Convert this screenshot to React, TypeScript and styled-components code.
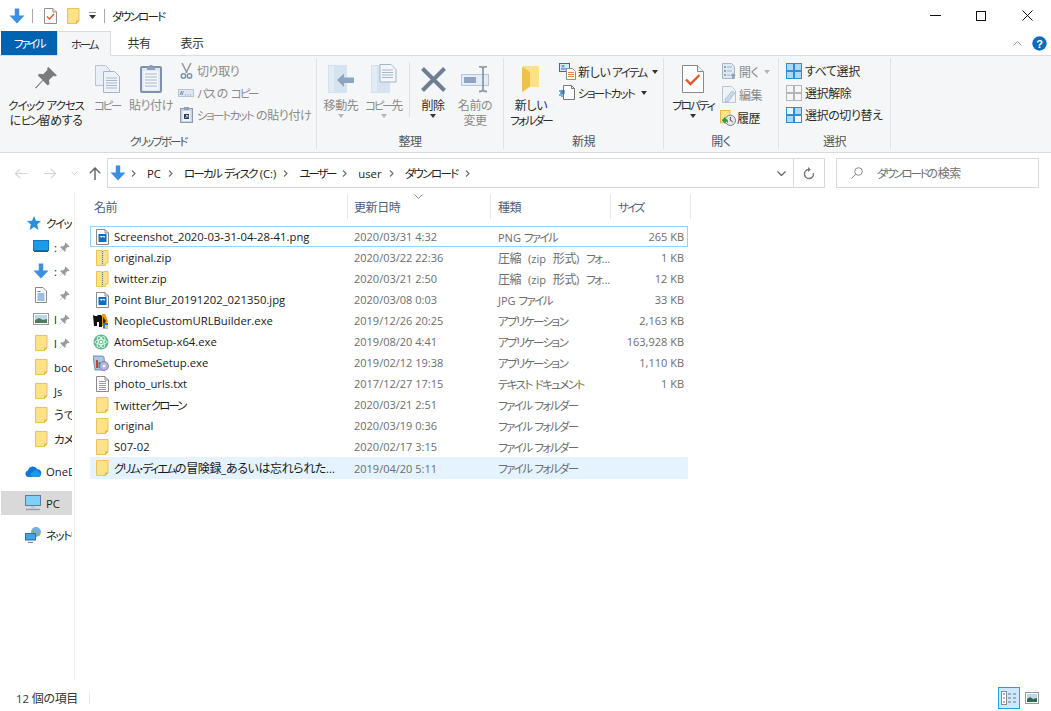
import React from "react";
import styled, { createGlobalStyle } from "styled-components";

const Global = createGlobalStyle`
  html, body { margin: 0; padding: 0; background: #fff; overflow: hidden; }
  body { font-family: "Open Sans", "Noto Sans CJK JP", sans-serif; font-size: 11.3px; color: #1a1a1a; font-feature-settings: "palt"; }
  svg { display: block; flex: none; }
`;

const KanaRun = styled.span<{ $ls: number }>`letter-spacing: ${p => p.$ls}px; font-size: 11.5px;`;
const KanjiRun = styled.span`font-size: 12px; letter-spacing: -0.4px;`;

/* Splits a label into katakana and kanji/hiragana runs: the reference's UI font sets katakana narrow and kanji full-width. */
const T = ({ s, ls = -1.6 }: { s: string; ls?: number }) => (
  <>
    {s.split(/([ァ-ヶー・･]+|[一-龯ぁ-ん]+)/).filter(Boolean).map((run, i) =>
      /^[ァ-ヶー・･]/.test(run) ? <KanaRun key={i} $ls={ls}>{run}</KanaRun>
        : /^[一-龯ぁ-ん]/.test(run) ? <KanjiRun key={i}>{run}</KanjiRun>
        : <span key={i}>{run}</span>
    )}
  </>
);

const Win = styled.div`width: 1051px; height: 711px; display: flex; flex-direction: column; overflow: hidden;`;

const TitleBar = styled.div`height: 31px; display: flex; align-items: center; padding: 0 1px 0 9px;`;
const QatSep = styled.div<{ $ml: number; $mr: number }>`width: 1px; height: 14px; background: #a8a8a8; margin: 0 ${p => p.$mr}px 0 ${p => p.$ml}px;`;
const QatGap = styled.div<{ $w: number }>`width: ${p => p.$w}px;`;
const TitleText = styled.div`color: #222; flex: 1;`;
const WinBtn = styled.div`width: 46px; height: 31px; display: flex; align-items: center; justify-content: center;`;

const TabRow = styled.div`height: 25px; box-sizing: border-box; display: flex; align-items: stretch; padding: 0 4px 0 1px; border-bottom: 1px solid #dadbdc;`;
const FileTab = styled.div`width: 56px; background: #0063b1; color: #fff; display: flex; align-items: center; justify-content: center;`;
const Tab = styled.div<{ $active?: boolean; $w: number }>`
  width: ${p => p.$w}px; display: flex; align-items: center; justify-content: center; color: #333; box-sizing: border-box;
  ${p => p.$active ? `background:#f5f6f7; border:1px solid #dadbdc; border-bottom:1px solid #f5f6f7; margin-bottom:-1px;` : ""}
`;
const TabSpacer = styled.div`flex: 1;`;
const TabRight = styled.div`display: flex; align-items: center; gap: 10px;`;

const Ribbon = styled.div`height: 97px; background: #f5f6f7; border-bottom: 1px solid #dadbdc; display: flex; box-sizing: border-box;`;
const Group = styled.div<{ $w: number }>`width: ${p => p.$w}px; box-sizing: border-box; display: flex; flex-direction: column; padding: 3px 0 1px;`;
const GroupRule = styled.div`width: 1px; margin: 2px 0 3px; background: #e1e2e3;`;
const GroupBody = styled.div`flex: 1; display: flex; align-items: flex-start; min-height: 0;`;
const GroupLabel = styled.div`height: 18px; line-height: 18px; text-align: center; color: #555; white-space: nowrap;`;

const BigBtn = styled.div<{ $w: number; $dim?: boolean; $ml?: number }>`
  width: ${p => p.$w}px; margin-left: ${p => p.$ml ?? 0}px; display: flex; flex-direction: column; align-items: center; flex: none;
  color: ${p => p.$dim ? "#8a8a8a" : "#2b2b2b"}; line-height: 14.5px; text-align: center; white-space: nowrap;
`;
const BigIcon = styled.div`height: 32px; display: flex; align-items: flex-end; justify-content: center; margin: 2px 0 6px;`;
const Caret = styled.div<{ $dim?: boolean }>`width: 0; height: 0; border-left: 3.5px solid transparent; border-right: 3.5px solid transparent; border-top: 4px solid ${p => p.$dim ? "#b5b5b5" : "#333"}; margin-top: 0;`;
const InlineCaret = styled(Caret)`display: inline-block; margin: 0 0 0 4px; vertical-align: middle;`;

const SmallCol = styled.div<{ $ml: number; $gap: number; $pt: number }>`
  margin-left: ${p => p.$ml}px; padding-top: ${p => p.$pt}px; display: flex; flex-direction: column; gap: ${p => p.$gap}px; flex: none;
`;
const SmallBtn = styled.div<{ $dim?: boolean; $gap?: number; $ml?: number }>`
  display: flex; align-items: center; height: 17px; gap: ${p => p.$gap ?? 3}px; white-space: nowrap; margin-left: ${p => p.$ml ?? 0}px;
  color: ${p => p.$dim ? "#8a8a8a" : "#2b2b2b"};
`;
const SmallSlot = styled.div`width: 16px; display: flex; justify-content: center; flex: none;`;
const GroupRuleInner = styled.div`width: 1px; height: 55px; background: #dfe0e1; margin: 3px 0 0 4px; flex: none;`;

const AddressRow = styled.div`height: 39px; display: flex; align-items: center; padding-top: 1px; box-sizing: border-box;`;
const NavZone = styled.div`width: 107px; display: flex; align-items: center; padding-left: 14px; box-sizing: border-box;`;
const NavBtn = styled.div<{ $ml: number }>`margin-left: ${p => p.$ml}px; flex: none;`;
const AddrBox = styled.div`width: 718px; height: 30px; box-sizing: border-box; border: 1px solid #d9d9d9; display: flex; align-items: center; padding-left: 2px;`;
const Crumbs = styled.div`flex: 1; display: flex; align-items: center; color: #222; white-space: nowrap;`;
const CrumbChev = styled.div`margin: 0 11px 0 7px; flex: none;`;
const CrumbFirstChev = styled(CrumbChev)`margin-left: 5px;`;
const AddrEnd = styled.div`width: 30px; height: 28px; display: flex; align-items: center; justify-content: center; border-left: 1px solid #d9d9d9;`;
const AddrDrop = styled.div`width: 24px; display: flex; justify-content: center;`;
const SearchBox = styled.div`margin-left: 11px; width: 203px; height: 30px; box-sizing: border-box; border: 1px solid #d9d9d9; display: flex; align-items: center; padding-left: 14px; gap: 14px; color: #707070;`;

const Main = styled.div`flex: 1; display: flex; min-height: 0;`;
const Sidebar = styled.div`width: 75px; box-sizing: border-box; border-right: 1px solid #f0f0f0; padding: 19px 0 0 1px; display: flex; flex-direction: column; margin-bottom: 5px;`;
const SideItem = styled.div<{ $sel?: boolean; $indent: number; $gapTop?: number }>`
  width: 71px; height: 24px; flex: none; display: flex; align-items: center; overflow: hidden; white-space: nowrap; box-sizing: border-box;
  padding-left: ${p => p.$indent}px; margin-top: ${p => p.$gapTop ?? 0}px; background: ${p => p.$sel ? "#d9d9d9" : "transparent"};
  color: #222;
`;
const SideIcon = styled.div`width: 16px; margin-right: 5px; flex: none; display: flex; justify-content: center;`;
const SideMark = styled.div`width: 5px; overflow: hidden; flex: none;`;
const StarSlot = styled.div`margin-right: 5px; flex: none;`;

const Content = styled.div`flex: 1; padding: 2px 0 0 15px; box-sizing: border-box; min-width: 0;`;
const Head = styled.div`display: flex; height: 25px; margin-bottom: 7px;`;
const HeadCell = styled.div<{ $w: number; $pl: number }>`
  width: ${p => p.$w}px; box-sizing: border-box; border-right: 1px solid #e5e5e5; padding-left: ${p => p.$pl}px; display: flex; align-items: center; position: relative;
  color: #4c607a;
`;
const SortMark = styled.div`position: absolute; top: 0; left: 66px;`;
const Row = styled.div<{ $focus?: boolean; $sel?: boolean }>`
  width: 598px; height: ${p => p.$sel ? 22 : 21}px; box-sizing: border-box; display: grid; grid-template-columns: 258px 144px 118px 78px; align-items: center;
  ${p => p.$focus ? "box-shadow: inset 0 0 0 1px #99d1ff;" : ""}
  ${p => p.$sel ? "background: #e5f3ff;" : ""}
`;
const NameCell = styled.div`display: flex; align-items: center; padding-left: 3px; gap: 5px; white-space: nowrap; overflow: hidden; color: #1a1a1a;`;
const FileIcon = styled.div`width: 16px; flex: none; display: flex; justify-content: flex-end;`;
const MetaCell = styled.div<{ $right?: boolean; $wide?: boolean }>`
  color: #6d6d6d; font-size: 11px; white-space: nowrap; padding-left: ${p => p.$right ? 0 : 6}px; ${p => p.$right ? "text-align:right; padding-right:4px;" : ""}
  ${p => p.$wide ? "word-spacing: 4px;" : ""}
`;

const Status = styled.div`height: 26px; display: flex; align-items: center; padding-left: 16px; color: #333; flex: none;`;
const StatusRule = styled.div`width: 1px; height: 12px; background: #eaeaea; margin-left: 11px;`;
const StatusSpacer = styled.div`flex: 1;`;
const ViewBtn = styled.div<{ $on?: boolean }>`
  width: 22px; height: 22px; box-sizing: border-box; display: flex; align-items: center; justify-content: center; margin-right: ${p => p.$on ? 1 : 8}px;
  ${p => p.$on ? "background:#cce8ff; border:1px solid #26a0da;" : ""}
`;

/* ---- icons ---- */
const DownArrow = ({ s = 16 }: { s?: number }) => (
  <svg width={s} height={s} viewBox="0 0 16 16"><path d="M5.800 0.500h4.400v7h5.300L8 15.500 .5 7.500h5.300z" fill="#3a8fe0" /></svg>
);
const CheckDoc = ({ w = 13, h = 16 }: { w?: number; h?: number }) => (
  <svg width={w} height={h} viewBox="0 0 13 16"><path d="M.5.500h8.500l3.500 3.500v11.500H.5z" fill="#fff" stroke="#8f8f8f" /><path d="M9 .5V4h3.500" fill="#eee" stroke="#8f8f8f" /><path d="M3 8.500l2.500 2.500 4.500-5" fill="none" stroke="#e8561f" strokeWidth="1.400" /></svg>
);
const Folder = () => (
  <svg width="13" height="16" viewBox="0 0 13 16"><path d="M.5 .5h11.500v12.500h-2.500v2.500H.5z" fill="#fde28a" stroke="#e9c452" /><path d="M9.500 13v2.500l2.500-2.500z" fill="#f1ca5f" stroke="#e0b540" strokeWidth=".7" /></svg>
);
const ZipIcon = () => (
  <svg width="13" height="16" viewBox="0 0 13 16"><path d="M.5 .5h11.500v12.500h-2.500v2.500H.5z" fill="#fde28a" stroke="#e9c452" /><rect x="5" y="0" width="3" height="15" fill="#d8d8d0" /><path d="M6.500 1v13" stroke="#7a7a70" strokeDasharray="1 1" /></svg>
);
const ImgFile = () => (
  <svg width="13" height="16" viewBox="0 0 13 16"><path d="M.5.500h8.500l3.500 3.500v11.500H.5z" fill="#fff" stroke="#8a8a8a" /><path d="M9 .5V4h3.500" fill="none" stroke="#8a8a8a" /><rect x="2.500" y="5" width="8" height="8" fill="#0d6fc4" /><path d="M3.500 7l2 2 1-1.500 2 1.500.5-2z" fill="#dff0ff" /></svg>
);
const TxtFile = () => (
  <svg width="13" height="16" viewBox="0 0 13 16"><path d="M.5.500h8.500l3.500 3.500v11.500H.5z" fill="#fff" stroke="#8a8a8a" /><path d="M9 .5V4h3.500" fill="none" stroke="#8a8a8a" /><path d="M3 5.500h7M3 7.500h7M3 9.500h7M3 11.500h7M3 13.500h7" stroke="#9a9a9a" /></svg>
);
const NeopleIcon = () => (
  <svg width="16" height="16" viewBox="0 0 16 16"><path d="M0 2l2 1h2l1-1h3l1 1v11H6V9H4v4H1z" fill="#111" /><path d="M9 1h3l3 7-2 5H9z" fill="#e89a1c" /><path d="M10 4l3 4-2 3-1-1z" fill="#3a2207" /><rect x="10" y="10" width="5" height="5.500" fill="#2f77c9" /><rect x="12" y="12" width="3" height="3.500" fill="#f6c934" /></svg>
);
const AtomIcon = () => (
  <svg width="16" height="16" viewBox="0 0 16 16"><circle cx="8" cy="8" r="7.500" fill="#5cb98a" /><g fill="none" stroke="#e8fbf1" strokeWidth=".9"><ellipse cx="8" cy="8" rx="6" ry="2.500" /><ellipse cx="8" cy="8" rx="6" ry="2.500" transform="rotate(60 8 8)" /><ellipse cx="8" cy="8" rx="6" ry="2.500" transform="rotate(120 8 8)" /></g><circle cx="8" cy="8" r="1.300" fill="#fff" /></svg>
);
const SetupIcon = () => (
  <svg width="16" height="16" viewBox="0 0 16 16"><path d="M0 1h9l2 1 1 13H2z" fill="#a7c8e8" stroke="#60798f" strokeWidth=".8" /><rect x="3" y="5" width="2" height="8" fill="#d23b32" /><rect x="5.500" y="7" width="2" height="6" fill="#3a9b4a" /><circle cx="11" cy="11" r="4.500" fill="#b8b2e0" stroke="#6b67a8" strokeWidth=".7" /><circle cx="11" cy="11" r="1.300" fill="#fff" /></svg>
);
const Pin = ({ c = "#9a9a9a" }: { c?: string }) => (
  <svg width="11" height="11" viewBox="0 0 11 11"><path d="M6.500 .5l4 4-1 .7-1-.3-2 2 .2 2-1 .8-2-2.200L.7 10.500l-.2-.2 2.900-3-2.200-2 .8-1 2 .2 2-2-.3-1z" fill={c} /></svg>
);
const Monitor = () => (
  <svg width="16" height="14" viewBox="0 0 16 14"><rect x=".5" y=".5" width="15" height="10" fill="#1c9be6" stroke="#1278bd" /><rect x="1" y="10.500" width="14" height="1.500" fill="#0d5f9c" /></svg>
);
const DocThumb = () => (
  <svg width="12" height="16" viewBox="0 0 12 16"><path d="M.5.500h7.500l3.500 3.500v11.500H.5z" fill="#fff" stroke="#8a8a8a" /><path d="M2.500 4.500h3M2.500 7h7M2.500 9h7M2.500 11h7M2.500 13h7" stroke="#3f7ec2" /></svg>
);
const PicThumb = () => (
  <svg width="16" height="12" viewBox="0 0 16 12"><rect x=".5" y=".5" width="15" height="11" fill="#fff" stroke="#9a9a9a" /><rect x="2" y="2" width="12" height="8" fill="#bcd9e8" /><path d="M2 7l4-2 4 2 4-1v4H2z" fill="#4f7a5e" /></svg>
);
const Cloud = () => (
  <svg width="17" height="11" viewBox="0 0 17 11"><path d="M3.500 11A3.300 3.300 0 0 1 3 4.500 5 5 0 0 1 12.300 3.200 4 4 0 0 1 13.500 11z" fill="#0f78d4" /><path d="M7 11a2.500 2.500 0 0 1 .5-4.800 3.600 3.600 0 0 1 6.500.2A2.400 2.400 0 0 1 14 11z" fill="#1c9be6" /></svg>
);
const PcIcon = () => (
  <svg width="16" height="16" viewBox="0 0 16 16"><rect x=".5" y=".5" width="15" height="10" fill="#7fd0f7" stroke="#5b7f99" /><path d="M6 11h4v2H6z" fill="#bcc7d0" /><path d="M1 14.500h14" stroke="#8ea2b3" strokeWidth="1.500" /></svg>
);
const NetIcon = () => (
  <svg width="17" height="16" viewBox="0 0 17 16"><circle cx="11" cy="5" r="5" fill="#6fb2ea" /><path d="M8 2c2 1 2 3 1 4s-2 1-2-1zM12 5c2-1 3 0 3 2s-3 3-3 1z" fill="#8fb65e" /><rect x=".5" y="6.500" width="10" height="6.500" fill="#3ea5ea" stroke="#2a6fa8" /><path d="M3 15.500h5" stroke="#6b8aa3" strokeWidth="1.200" /></svg>
);
const Chev = () => (
  <svg width="5" height="7" viewBox="0 0 5 7"><path d="M1 .5l3 3-3 3" fill="none" stroke="#707070" strokeWidth="1.200" /></svg>
);

const PinBig = () => (
  <svg width="22" height="26" viewBox="0 0 22 26"><path d="M13.500 0l8.500 8.500-2 1-1.500-.7-4.500 4.300.5 3.900-1.800 1.500-4.700-4.700L1 21.500l-1-.7 7.500-7.700-4.700-4.500L4.300 6.800l3.900.4 4.300-4.500-.5-1.400z" fill="#7b7b7b" /></svg>
);
const CopyBig = () => (
  <svg width="25" height="28" viewBox="0 0 25 28"><path d="M.5.500h10l4 4v16H.5z" fill="#eaf0f7" stroke="#b7c4d3" /><path d="M8.500 6.500h11l5 5v16h-16z" fill="#eef3f9" stroke="#a5b4c6" /><path d="M11 13h11M11 15.500h11M11 18h11M11 20.500h11M11 23h11" stroke="#a9b8ca" /></svg>
);
const PasteBig = () => (
  <svg width="22" height="29" viewBox="0 0 22 29"><rect x="1" y="3" width="20" height="25" rx="1" fill="#dfe7f2" stroke="#7f92ad" strokeWidth="2" /><rect x="3.500" y="7" width="15" height="19" fill="#f2f5fa" /><path d="M5 10h12M5 13h12M5 16h12M5 19h12M5 22h12" stroke="#aab8cb" /><path d="M7 6V3h2.500V1h3v2H15v3z" fill="#8fa0b8" /></svg>
);
const Scissors = () => (
  <svg width="13" height="16" viewBox="0 0 13 16"><path d="M2 0l5 10M11 0L6 10" stroke="#9a9a9a" strokeWidth="1.600" fill="none" /><circle cx="3.500" cy="13" r="2.200" fill="none" stroke="#7d93ad" strokeWidth="1.500" /><circle cx="9.500" cy="13" r="2.200" fill="none" stroke="#7d93ad" strokeWidth="1.500" /></svg>
);
const PathIcon = () => (
  <svg width="16" height="8" viewBox="0 0 16 8"><rect x=".5" y=".5" width="15" height="7" fill="#dde6f2" stroke="#b7c4d6" /><path d="M2 6l1.500-4L4 6l1.500-4M7 6h1M9.500 6h1M12 6h1" stroke="#7a8aa0" strokeWidth=".8" fill="none" /></svg>
);
const PasteShortcut = () => (
  <svg width="13" height="16" viewBox="0 0 13 16"><rect x=".5" y="1.500" width="12" height="14" fill="#c9d3e0" stroke="#8b9ab0" /><rect x="2.500" y="4" width="8" height="10" fill="#f2f5fa" /><rect x="4" y="0" width="5" height="3" fill="#8fa0b8" /><path d="M4 7h5v5H4z" fill="#26415f" /><path d="M5.300 11l2-2M6 8.500h1.800V10.300" stroke="#fff" strokeWidth=".8" fill="none" /></svg>
);
const MoveBig = () => (
  <svg width="26" height="28" viewBox="0 0 26 28"><path d="M0 0h19v28H0z" fill="#d5e2f0" /><path d="M1 1h5v26H1z" fill="#e3ecf5" /><path d="M9 15l7-6.500v4h10v5.500H16v4z" fill="#8ea5c0" /></svg>
);
const CopyToBig = () => (
  <svg width="26" height="29" viewBox="0 0 26 29"><path d="M0 1h19v28H0z" fill="#d5e2f0" /><path d="M1 2h5v26H1z" fill="#e3ecf5" /><path d="M9 .5h11l5 5V18H9z" fill="#f3f6fa" stroke="#a5b4c6" /><path d="M11 6h11M11 8.500h11M11 11h11M11 13.500h11" stroke="#a5b4c6" /></svg>
);
const XBig = () => (
  <svg width="25" height="26" viewBox="0 0 25 26"><path d="M1.500 1.500l22 22M23.500 1.500l-22 22" stroke="#6f7f93" strokeWidth="4" /></svg>
);
const RenameBig = () => (
  <svg width="29" height="27" viewBox="0 0 29 27"><rect x=".5" y="8.500" width="27" height="11" fill="#e4ecf5" stroke="#b5c4d6" /><rect x="3" y="11" width="12" height="6" fill="#8ea5c0" /><path d="M18 .5c3 0 4 1 4 2v21c0 1-1 2-4 2M26 .5c-3 0-4 1-4 2v21c0 1 1 2 4 2" fill="none" stroke="#8c9bad" strokeWidth="1.800" /></svg>
);
const FolderBig = () => (
  <svg width="21" height="28" viewBox="0 0 21 28"><path d="M2 1h16v21H9L2 27z" fill="#fbd973" /><path d="M1 2v25l8-6V7z" fill="#f0bf4e" /><path d="M3 1h15v21H9V7z" fill="#fde08a" /></svg>
);
const NewItem = () => (
  <svg width="17" height="17" viewBox="0 0 17 17"><rect x=".5" y=".5" width="10" height="8" fill="#dbeafb" stroke="#2c6fb3" /><path d="M2 6h7" stroke="#2c6fb3" /><rect x="2.500" y="2" width="3" height="2.500" fill="#6aa5dd" /><path d="M7.500 5.500h6l3 3v8h-9z" fill="#fff" stroke="#8f8f8f" /><path d="M9 9.500h6M9 11.500h6M9 13.500h6" stroke="#e28a3a" /></svg>
);
const ShortcutIc = () => (
  <svg width="16" height="15" viewBox="0 0 16 15"><path d="M4.500.5h8l3 3v11h-11z" fill="#fff" stroke="#777" /><path d="M12.500.5v3h3" fill="none" stroke="#777" /><path d="M0 6h6M1 8h5M0 10h2M3 5v7" stroke="#1268b3" fill="none" /></svg>
);
const PropBig = () => (
  <svg width="22" height="28" viewBox="0 0 22 28"><path d="M.5.500h15l6 6v21H.5z" fill="#fff" stroke="#8a8a8a" /><path d="M15.500.5v6h6" fill="#eee" stroke="#8a8a8a" /><path d="M4 14.500l4.500 4.500 9-9" fill="none" stroke="#e8561f" strokeWidth="2.400" /></svg>
);
const OpenIc = () => (
  <svg width="15" height="17" viewBox="0 0 15 17"><path d="M.5.500h9l3 3v12H.5z" fill="#e0e8f2" stroke="#a5b4c6" /><path d="M2 3h2v2H2zM2 7h2v2H2zM2 11h2v2H2z" fill="#8ea5c0" /><path d="M5 4h5M5 8h5M5 12h3" stroke="#a5b4c6" /><path d="M11 10l3 3h-2v3h-2v-3H8z" fill="#8ea5c0" /></svg>
);
const EditIc = () => (
  <svg width="15" height="17" viewBox="0 0 15 17"><path d="M.5.500h9l4 4v12H.5z" fill="#f0f4f9" stroke="#b5c4d6" /><path d="M10 5l3 2-7 9-3 0 0-3z" fill="#c8d7e8" stroke="#a5b9d0" strokeWidth=".7" /></svg>
);
const HistIc = () => (
  <svg width="16" height="16" viewBox="0 0 17 17"><rect x=".5" y=".5" width="10" height="13" fill="#fde28a" stroke="#e2b93f" /><circle cx="11" cy="11" r="5.500" fill="#e6e6e6" stroke="#777" /><path d="M11 7.500V11l2.500 1.500" fill="none" stroke="#444" /><path d="M2 11l3.500-4v2.300c2 0 3 1 3 3v2c-.5-1.500-1.500-2-3-2V15z" fill="#2f9e3f" /></svg>
);
const SelGrid = ({ mode }: { mode: "all" | "none" | "inv" }) => {
  const cells = [[0, 0], [8, 0], [0, 8], [8, 8]];
  const on = mode === "all" ? [1, 1, 1, 1] : mode === "none" ? [0, 0, 0, 0] : [0, 1, 1, 0];
  return (
    <svg width="16" height="16" viewBox="0 0 16 16">
      {cells.map(([x, y], i) => (
        <rect key={i} x={x + .5} y={y + .5} width="7" height="7" fill={on[i] ? "#aed6f6" : "#f5f6f7"} stroke={on[i] ? "#2c8fd9" : mode === "none" ? "#b5b5b5" : "#2c8fd9"} />
      ))}
    </svg>
  );
};

const files: { name: string; date: string; type: string; size: string; icon: React.ReactNode }[] = [
  { name: "Screenshot_2020-03-31-04-28-41.png", date: "2020/03/31 4:32", type: "PNG ファイル", size: "265 KB", icon: <ImgFile /> },
  { name: "original.zip", date: "2020/03/22 22:36", type: "圧縮 (zip 形式) フォ...", size: "1 KB", icon: <ZipIcon /> },
  { name: "twitter.zip", date: "2020/03/21 2:50", type: "圧縮 (zip 形式) フォ...", size: "12 KB", icon: <ZipIcon /> },
  { name: "Point Blur_20191202_021350.jpg", date: "2020/03/08 0:03", type: "JPG ファイル", size: "33 KB", icon: <ImgFile /> },
  { name: "NeopleCustomURLBuilder.exe", date: "2019/12/26 20:25", type: "アプリケーション", size: "2,163 KB", icon: <NeopleIcon /> },
  { name: "AtomSetup-x64.exe", date: "2019/08/20 4:41", type: "アプリケーション", size: "163,928 KB", icon: <AtomIcon /> },
  { name: "ChromeSetup.exe", date: "2019/02/12 19:38", type: "アプリケーション", size: "1,110 KB", icon: <SetupIcon /> },
  { name: "photo_urls.txt", date: "2017/12/27 17:15", type: "テキスト ドキュメント", size: "1 KB", icon: <TxtFile /> },
  { name: "Twitterクローン", date: "2020/03/21 2:51", type: "ファイル フォルダー", size: "", icon: <Folder /> },
  { name: "original", date: "2020/03/19 0:36", type: "ファイル フォルダー", size: "", icon: <Folder /> },
  { name: "S07-02", date: "2020/02/17 3:15", type: "ファイル フォルダー", size: "", icon: <Folder /> },
  { name: "グリム･ディエムの冒険録_あるいは忘れられた...", date: "2019/04/20 5:11", type: "ファイル フォルダー", size: "", icon: <Folder /> },
];

const sideQuick: { icon: React.ReactNode; text: string; pin?: boolean }[] = [
  { icon: <Monitor />, text: ":", pin: true },
  { icon: <DownArrow />, text: ":", pin: true },
  { icon: <DocThumb />, text: " ", pin: true },
  { icon: <PicThumb />, text: "l", pin: true },
  { icon: <Folder />, text: "l", pin: true },
  { icon: <Folder />, text: "boo" },
  { icon: <Folder />, text: "Js" },
  { icon: <Folder />, text: "うで" },
  { icon: <Folder />, text: "カメ" },
];

const crumbs: [string, number][] = [["PC", 0], ["ローカル ディスク (C:)", -1.7], ["ユーザー", -2.2], ["user", 0], ["ダウンロード", -1.6]];

export default function App() {
  return (
    <Win>
      <Global />
      <TitleBar>
        <DownArrow />
        <QatSep $ml={7} $mr={11} />
        <CheckDoc />
        <QatGap $w={10} />
        <Folder />
        <QatGap $w={8} />
        <svg width="9" height="8" viewBox="0 0 9 8"><path d="M1 0h7" stroke="#333" /><path d="M1 3h7L4.500 7z" fill="#333" /></svg>
        <QatSep $ml={7} $mr={7} />
        <TitleText><T s="ダウンロード" ls={-1.7} /></TitleText>
        <WinBtn><svg width="11" height="1" viewBox="0 0 11 1"><rect width="11" height="1" fill="#111" /></svg></WinBtn>
        <WinBtn><svg width="10" height="10" viewBox="0 0 10 10"><rect x=".5" y=".5" width="9" height="9" fill="none" stroke="#111" /></svg></WinBtn>
        <WinBtn><svg width="11" height="11" viewBox="0 0 11 11"><path d="M.5.500l10 10M10.500.5l-10 10" stroke="#111" /></svg></WinBtn>
      </TitleBar>
      <TabRow>
        <FileTab><T s="ファイル" ls={-2.4} /></FileTab>
        <Tab $active $w={54}><T s="ホーム" ls={-2.2} /></Tab>
        <Tab $w={56}><T s="共有" /></Tab>
        <Tab $w={50}><T s="表示" /></Tab>
        <TabSpacer />
        <TabRight>
          <svg width="9" height="5" viewBox="0 0 9 5"><path d="M.5 4.500l4-4 4 4" fill="none" stroke="#9a9a9a" /></svg>
          <svg width="15" height="15" viewBox="0 0 15 15"><circle cx="7.500" cy="7.500" r="7.200" fill="#0f6cbd" /><text x="7.500" y="11.500" fontSize="11" fontWeight="700" textAnchor="middle" fill="#fff" fontFamily="Liberation Sans, sans-serif">?</text></svg>
        </TabRight>
      </TabRow>
      <Ribbon>
        <Group $w={316}>
          <GroupBody>
            <BigBtn $w={90} $ml={1}>
              <BigIcon><PinBig /></BigIcon>
              <span><T s="クイック アクセス" ls={-1.1} /><br /><T s="にピン留めする" ls={-1.6} /></span>
            </BigBtn>
            <BigBtn $w={32} $dim>
              <BigIcon><CopyBig /></BigIcon>
              <span><T s="コピー" ls={-2.3} /></span>
            </BigBtn>
            <BigBtn $w={46} $ml={5} $dim>
              <BigIcon><PasteBig /></BigIcon>
              <span><T s="貼り付け" /></span>
            </BigBtn>
            <SmallCol $ml={4} $pt={3} $gap={5}>
              <SmallBtn $dim><SmallSlot><Scissors /></SmallSlot><T s="切り取り" /></SmallBtn>
              <SmallBtn $dim><SmallSlot><PathIcon /></SmallSlot><T s="パスのコピー" ls={-2.2} /></SmallBtn>
              <SmallBtn $dim><SmallSlot><PasteShortcut /></SmallSlot><T s="ショートカットの貼り付け" ls={-1.7} /></SmallBtn>
            </SmallCol>
          </GroupBody>
          <GroupLabel><T s="クリップボード" ls={-2} /></GroupLabel>
        </Group>
        <GroupRule />
        <Group $w={186}>
          <GroupBody>
            <BigBtn $w={44} $ml={2} $dim>
              <BigIcon><MoveBig /></BigIcon>
              <span><T s="移動先" /></span>
              <Caret $dim />
            </BigBtn>
            <BigBtn $w={42} $dim>
              <BigIcon><CopyToBig /></BigIcon>
              <span><T s="コピー先" ls={-2.3} /></span>
              <Caret $dim />
            </BigBtn>
            <GroupRuleInner />
            <BigBtn $w={46} $ml={0}>
              <BigIcon><XBig /></BigIcon>
              <span><T s="削除" /></span>
              <Caret />
            </BigBtn>
            <BigBtn $w={38} $dim>
              <BigIcon><RenameBig /></BigIcon>
              <span><T s="名前の" /><br /><T s="変更" /></span>
            </BigBtn>
          </GroupBody>
          <GroupLabel><T s="整理" /></GroupLabel>
        </Group>
        <GroupRule />
        <Group $w={159}>
          <GroupBody>
            <BigBtn $w={50} $ml={2}>
              <BigIcon><FolderBig /></BigIcon>
              <span><T s="新しい" /><br /><T s="フォルダー" ls={-1.9} /></span>
            </BigBtn>
            <SmallCol $ml={3} $pt={4} $gap={4}>
              <SmallBtn $gap={2}><NewItem /><T s="新しいアイテム" ls={-1.7} /><InlineCaret /></SmallBtn>
              <SmallBtn $gap={3}><ShortcutIc /><T s="ショートカット" ls={-1.7} /><InlineCaret /></SmallBtn>
            </SmallCol>
          </GroupBody>
          <GroupLabel><T s="新規" /></GroupLabel>
        </Group>
        <GroupRule />
        <Group $w={114}>
          <GroupBody>
            <BigBtn $w={54} $ml={2}>
              <BigIcon><PropBig /></BigIcon>
              <span><T s="プロパティ" ls={-1.9} /></span>
              <Caret />
            </BigBtn>
            <SmallCol $ml={2} $pt={4} $gap={6}>
              <SmallBtn $dim $gap={2}><OpenIc /><T s="開く" /><InlineCaret $dim /></SmallBtn>
              <SmallBtn $dim $gap={2}><EditIc /><T s="編集" /></SmallBtn>
              <SmallBtn $gap={1} $ml={-2}><HistIc /><T s="履歴" /></SmallBtn>
            </SmallCol>
          </GroupBody>
          <GroupLabel><T s="開く" /></GroupLabel>
        </Group>
        <GroupRule />
        <Group $w={111}>
          <GroupBody>
            <SmallCol $ml={7} $pt={3} $gap={5}>
              <SmallBtn $gap={3}><SelGrid mode="all" /><T s="すべて選択" /></SmallBtn>
              <SmallBtn $gap={3}><SelGrid mode="none" /><T s="選択解除" /></SmallBtn>
              <SmallBtn $gap={3}><SelGrid mode="inv" /><T s="選択の切り替え" /></SmallBtn>
            </SmallCol>
          </GroupBody>
          <GroupLabel><T s="選択" /></GroupLabel>
        </Group>
        <GroupRule />
      </Ribbon>
      <AddressRow>
        <NavZone>
          <NavBtn $ml={1}><svg width="12" height="11" viewBox="0 0 13 11"><path d="M5.500.5l-5 5 5 5M.5 5.500H13" fill="none" stroke="#d4d4d4" strokeWidth="1.300" /></svg></NavBtn>
          <NavBtn $ml={17}><svg width="12" height="11" viewBox="0 0 13 11"><path d="M7.500.5l5 5-5 5M12.500 5.500H0" fill="none" stroke="#d4d4d4" strokeWidth="1.300" /></svg></NavBtn>
          <NavBtn $ml={15}><svg width="7" height="4" viewBox="0 0 7 4"><path d="M.5.500l3 3 3-3" fill="none" stroke="#d4d4d4" /></svg></NavBtn>
          <NavBtn $ml={11}><svg width="12" height="13" viewBox="0 0 12 13"><path d="M.8 6.200L6 1l5.200 5.200M6 1v12" fill="none" stroke="#6a6a6a" strokeWidth="1.500" /></svg></NavBtn>
        </NavZone>
        <AddrBox>
          <Crumbs>
            <DownArrow />
            <CrumbFirstChev><Chev /></CrumbFirstChev>
            {crumbs.map(([s, ls]) => (
              <React.Fragment key={s}>
                <span><T s={s} ls={ls} /></span>
                <CrumbChev><Chev /></CrumbChev>
              </React.Fragment>
            ))}
          </Crumbs>
          <AddrDrop><svg width="9" height="5" viewBox="0 0 9 5"><path d="M.5.500l4 4 4-4" fill="none" stroke="#666" strokeWidth="1.300" /></svg></AddrDrop>
          <AddrEnd><svg width="12" height="13" viewBox="0 0 12 13"><path d="M6 2.500a4.500 4.500 0 1 1-4.500 4.500" fill="none" stroke="#777" strokeWidth="1.500" transform="rotate(80 6 7)" /><path d="M5 0v5l3-2.500z" fill="#777" /></svg></AddrEnd>
        </AddrBox>
        <SearchBox>
          <svg width="12" height="12" viewBox="0 0 12 12"><circle cx="7.500" cy="4.500" r="3.800" fill="none" stroke="#8a8a8a" /><path d="M4.800 7.200L.5 11.500" stroke="#8a8a8a" /></svg>
          <span><T s="ダウンロードの検索" ls={-2.2} /></span>
        </SearchBox>
      </AddressRow>
      <Main>
        <Sidebar>
          <SideItem $indent={26}>
            <StarSlot><svg width="14" height="14" viewBox="0 0 14 14"><path d="M7 0l2 4.700 5 .4-3.800 3.300L11.400 14 7 11l-4.400 3 1.200-5.600L0 5.100l5-.4z" fill="#2b8fe0" /></svg></StarSlot>
            <T s="クイックアクセス" ls={-1.5} />
          </SideItem>
          {sideQuick.map((s, i) => (
            <SideItem key={i} $indent={32}>
              <SideIcon>{s.icon}</SideIcon>
              {s.pin ? <><SideMark>{s.text}</SideMark><Pin /></> : <T s={s.text} ls={-1} />}
            </SideItem>
          ))}
          <SideItem $indent={24} $gapTop={8}><SideIcon><Cloud /></SideIcon>OneDrive</SideItem>
          <SideItem $indent={24} $gapTop={8} $sel><SideIcon><PcIcon /></SideIcon>PC</SideItem>
          <SideItem $indent={24} $gapTop={8}><SideIcon><NetIcon /></SideIcon><T s="ネットワーク" ls={-1.4} /></SideItem>
        </Sidebar>
        <Content>
          <Head>
            <HeadCell $w={258} $pl={4}><T s="名前" /></HeadCell>
            <HeadCell $w={143} $pl={6}>
              <T s="更新日時" />
              <SortMark><svg width="9" height="5" viewBox="0 0 9 5"><path d="M.5.500l4 4 4-4" fill="none" stroke="#8a8a8a" /></svg></SortMark>
            </HeadCell>
            <HeadCell $w={120} $pl={7}><T s="種類" /></HeadCell>
            <HeadCell $w={80} $pl={7}><T s="サイズ" ls={-2} /></HeadCell>
          </Head>
          {files.map((f, i) => (
            <Row key={f.name} $focus={i === 0} $sel={i === 11}>
              <NameCell><FileIcon>{f.icon}</FileIcon><span><T s={f.name} ls={-2} /></span></NameCell>
              <MetaCell>{f.date}</MetaCell>
              <MetaCell $wide={f.type.includes("zip")}><T s={f.type} ls={-1.6} /></MetaCell>
              <MetaCell $right>{f.size}</MetaCell>
            </Row>
          ))}
        </Content>
      </Main>
      <Status>
        <T s={"12\u00a0個の項目"} />
        <StatusRule />
        <StatusSpacer />
        <ViewBtn $on>
          <svg width="16" height="14" viewBox="0 0 16 14"><rect x=".5" y=".5" width="5" height="13" fill="#fff" stroke="#8a8a8a" /><path d="M2 3h2" stroke="#555" /><path d="M2 7h2" stroke="#3d8fd0" /><path d="M2 11h2" stroke="#d0403d" /><path d="M7 3h3M12 3h3M7 7h3M12 7h3M7 11h3M12 11h3" stroke="#777" /></svg>
        </ViewBtn>
        <ViewBtn>
          <svg width="14" height="12" viewBox="0 0 14 12"><rect x=".5" y=".5" width="13" height="11" fill="#fff" stroke="#9a9a9a" /><rect x="2" y="2" width="10" height="8" fill="#bcd9e8" /><path d="M2 7l3-2 3 2 4-1v4H2z" fill="#2f6a55" /></svg>
        </ViewBtn>
      </Status>
    </Win>
  );
}
